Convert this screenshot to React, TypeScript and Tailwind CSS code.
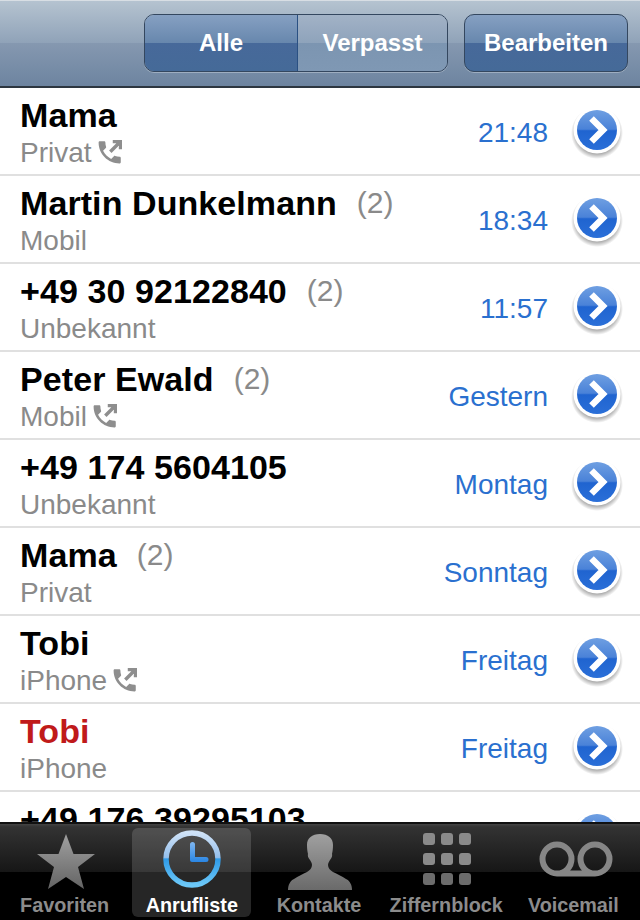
import React from 'react'

type Call = { name: string; count?: number; sub: string; time: string; phone?: boolean; missed?: boolean }

const calls: Call[] = [
  { name: 'Mama', sub: 'Privat', time: '21:48', phone: true },
  { name: 'Martin Dunkelmann', count: 2, sub: 'Mobil', time: '18:34' },
  { name: '+49 30 92122840', count: 2, sub: 'Unbekannt', time: '11:57' },
  { name: 'Peter Ewald', count: 2, sub: 'Mobil', time: 'Gestern', phone: true },
  { name: '+49 174 5604105', sub: 'Unbekannt', time: 'Montag' },
  { name: 'Mama', count: 2, sub: 'Privat', time: 'Sonntag' },
  { name: 'Tobi', sub: 'iPhone', time: 'Freitag', phone: true },
  { name: 'Tobi', sub: 'iPhone', time: 'Freitag', missed: true },
  { name: '+49 176 39295103', sub: 'Mobil', time: 'Freitag' },
]

const PhoneIcon = () => (
  <svg width="24" height="24" viewBox="2.5 2 19.5 19.5" className="ml-[6px] mt-[-2px]">
    <path
      fill="#8e8e8e"
      d="M6.62 10.79c1.44 2.83 3.76 5.14 6.59 6.59l2.2-2.2c.27-.27.67-.36 1.02-.24 1.12.37 2.33.57 3.57.57.55 0 1 .45 1 1V20c0 .55-.45 1-1 1-9.39 0-17-7.61-17-17 0-.55.45-1 1-1h3.5c.55 0 1 .45 1 1 0 1.25.2 2.45.57 3.57.11.35.03.74-.25 1.02l-2.2 2.2z"
    />
    <path d="M12.500 11.500 20 4M14.500 3.200h6.300v6.300" fill="none" stroke="#8e8e8e" strokeWidth="2.800" />
  </svg>
)

const DisclosureButton = () => (
  <svg width="54" height="56" viewBox="0 0 54 56" className="shrink-0">
    <defs>
      <linearGradient id="discBlue" x1="0" y1="0" x2="0" y2="1">
        <stop offset="0" stopColor="#6f9fe2" />
        <stop offset="0.48" stopColor="#4a82d8" />
        <stop offset="0.52" stopColor="#2064d0" />
        <stop offset="1" stopColor="#2a6fd8" />
      </linearGradient>
      <radialGradient id="discShadow" cx="0.5" cy="0.5" r="0.5">
        <stop offset="0.75" stopColor="#000" stopOpacity="0.4" />
        <stop offset="1" stopColor="#000" stopOpacity="0" />
      </radialGradient>
    </defs>
    <circle cx="27" cy="30" r="26" fill="url(#discShadow)" />
    <circle cx="27" cy="27" r="23.500" fill="#fff" />
    <circle cx="27" cy="27" r="20" fill="url(#discBlue)" />
    <path d="M21.500 15.500 33 27 21.500 38.500" fill="none" stroke="#fff" strokeWidth="6.500" />
  </svg>
)

const CallRow = ({ call }: { call: Call }) => (
  <div className="flex h-[88px] shrink-0 items-center border-b-2 border-[#e0e0e0] bg-white pl-5 pr-[19px]">
    <div className="min-w-0 flex-1 pb-[2px]">
      <div className="flex h-[44px] items-center whitespace-nowrap">
        <span
          className={`text-[34px] font-bold leading-none tracking-[0.08px] ${call.missed ? 'text-[#c01a1a]' : 'text-black'}`}
        >
          {call.name}
        </span>
        {call.count && <span className="ml-[20px] text-[30px] leading-none text-[#8a8a8a]">({call.count})</span>}
      </div>
      <div className="mt-[1px] flex h-[30px] items-center text-[28px] leading-none text-[#8a8a8a]">
        {call.sub}
        {call.phone && <PhoneIcon />}
      </div>
    </div>
    <div className="mr-[22px] mt-[4px] text-[28px] leading-none text-[#2a70cf]">{call.time}</div>
    <div className="-mr-[3px]">
      <DisclosureButton />
    </div>
  </div>
)

const StarIcon = () => (
  <svg width="60" height="56" viewBox="0 0 60 56" className="ml-[2px] mt-[6px]">
    <defs>
      <linearGradient id="tabGray" x1="0" y1="0" x2="0" y2="1">
        <stop offset="0" stopColor="#a0a0a0" />
        <stop offset="1" stopColor="#646464" />
      </linearGradient>
    </defs>
    <path fill="url(#tabGray)" d="M30 0 37.500 20 59 20 42 33 48 55 30 43 12 55 18 33 1 20 22.500 20Z" />
  </svg>
)

const ClockIcon = () => (
  <svg width="60" height="60" viewBox="0 0 60 60">
    <defs>
      <linearGradient id="clockRing" x1="0" y1="0" x2="0" y2="1">
        <stop offset="0" stopColor="#cfe2f7" />
        <stop offset="0.47" stopColor="#94bfec" />
        <stop offset="0.5" stopColor="#2f9be8" />
        <stop offset="1" stopColor="#6cc8f8" />
      </linearGradient>
      <linearGradient id="clockHand" x1="0" y1="0" x2="0" y2="1">
        <stop offset="0" stopColor="#7fb6ef" />
        <stop offset="1" stopColor="#2a86e4" />
      </linearGradient>
    </defs>
    <circle cx="30" cy="30" r="26" fill="none" stroke="url(#clockRing)" strokeWidth="5.500" />
    <path d="M28 15.500a2.500 2.500 0 0 1 5 0V28h11a2.500 2.500 0 0 1 0 5H30a2 2 0 0 1-2-2Z" fill="url(#clockHand)" />
  </svg>
)

const PersonIcon = () => (
  <svg width="66" height="58" viewBox="0 0 66 58" className="ml-[2px] mt-[6px]">
    <defs>
      <linearGradient id="personGray" x1="0" y1="0" x2="0" y2="1">
        <stop offset="0" stopColor="#a0a0a0" />
        <stop offset="1" stopColor="#6a6a6a" />
      </linearGradient>
    </defs>
    <path
      fill="url(#personGray)"
      d="M33 1C41 1 46 5 46 12C46 16 45.500 19 45 21C45.500 22 45 25 43 27C42 29 41 30 41 32C41 35 43 37 46 39C50 41 55 43 59 46C63 48 65 52 65 57H1C1 52 3 48 7 46C11 43 16 41 20 39C23 37 25 35 25 32C25 30 24 29 23 27C21 25 20.500 22 21 21C20.500 19 20 16 20 12C20 5 25 1 33 1Z"
    />
  </svg>
)

const KeypadIcon = () => (
  <div className="ml-[2px] grid grid-cols-3 gap-x-[6px] gap-y-[8px]">
    {[0, 1, 2, 3, 4, 5].map(i => (
      <div key={i} className="h-3 w-3 rounded-[3px] bg-[#8a8a8a]" />
    ))}
    {[6, 7, 8].map(i => (
      <div key={i} className="h-3 w-3 rounded-[3px] bg-[#6c6c6c]" />
    ))}
  </div>
)

const VoicemailIcon = () => (
  <svg width="76" height="36" viewBox="0 0 76 36" className="ml-[6px]">
    <path
      fill="none"
      stroke="#868686"
      strokeWidth="6"
      d="M19 32.500H57M19 32.500a14.500 14.500 0 1 1 0-29 14.500 14.500 0 0 1 0 29ZM57 32.500a14.500 14.500 0 1 1 0-29 14.500 14.500 0 0 1 0 29Z"
    />
  </svg>
)

const tabs = [
  { label: 'Favoriten', icon: <StarIcon /> },
  { label: 'Anrufliste', icon: <ClockIcon />, active: true },
  { label: 'Kontakte', icon: <PersonIcon /> },
  { label: 'Ziffernblock', icon: <KeypadIcon /> },
  { label: 'Voicemail', icon: <VoicemailIcon /> },
]

export default function App() {
  return (
    <div className="flex h-[920px] w-[640px] flex-col overflow-hidden bg-white font-['Liberation_Sans',Arial,sans-serif]">
      {/* Nav bar */}
      <div className="flex h-[88px] shrink-0 items-start justify-end gap-4 border-t border-t-[#d8dee4] border-b-2 border-b-[#2d3640] bg-[linear-gradient(#b5c3d0_0%,#8fa2b8_50%,#8598b0_50%,#6d84a0_100%)] pt-[13px] pr-3">
        <div className="flex h-[58px] w-[304px] overflow-hidden rounded-[10px] border border-[#34475f] text-[24px] font-bold text-white shadow-[0_1px_0_rgba(255,255,255,0.3)]">
          <div className="flex w-[153px] items-center justify-center border-r border-[#2a5082] bg-[linear-gradient(#86a0c2_0%,#6787ad_50%,#47699a_50%,#456a98_100%)]">
            Alle
          </div>
          <div className="flex flex-1 items-center justify-center bg-[linear-gradient(#a2b2c6_0%,#8ea3bb_50%,#7c95b1_50%,#7f98b4_100%)]">
            Verpasst
          </div>
        </div>
        <div className="flex h-[58px] w-[164px] items-center justify-center rounded-[10px] border border-[#34475f] bg-[linear-gradient(#86a0c2_0%,#6787ad_50%,#47699a_50%,#456a98_100%)] text-[24px] font-bold text-white shadow-[0_1px_0_rgba(255,255,255,0.3)]">
          Bearbeiten
        </div>
      </div>

      {/* Call list */}
      <div className="min-h-0 flex-1 overflow-hidden">
        {calls.map((call, i) => (
          <CallRow key={i} call={call} />
        ))}
      </div>

      {/* Tab bar */}
      <div className="grid h-[98px] shrink-0 grid-cols-5 border-t-2 border-t-[#111] bg-[linear-gradient(#444_0%,#333_3%,#161616_50%,#000_50%,#000_100%)] px-[2px] pt-1 pb-1">
        {tabs.map(tab => (
          <div
            key={tab.label}
            className={`ml-[3px] mr-[5px] flex flex-col items-center rounded-[6px] ${tab.active ? 'bg-[rgba(255,255,255,0.15)]' : ''}`}
          >
            <div className="flex h-[62px] w-full items-center justify-center">{tab.icon}</div>
            <div
              className={`mt-[3px] whitespace-nowrap text-[19.8px] font-bold leading-[24px] ${tab.active ? 'text-white' : 'text-[#8c8c8c]'}`}
            >
              {tab.label}
            </div>
          </div>
        ))}
      </div>
    </div>
  )
}
